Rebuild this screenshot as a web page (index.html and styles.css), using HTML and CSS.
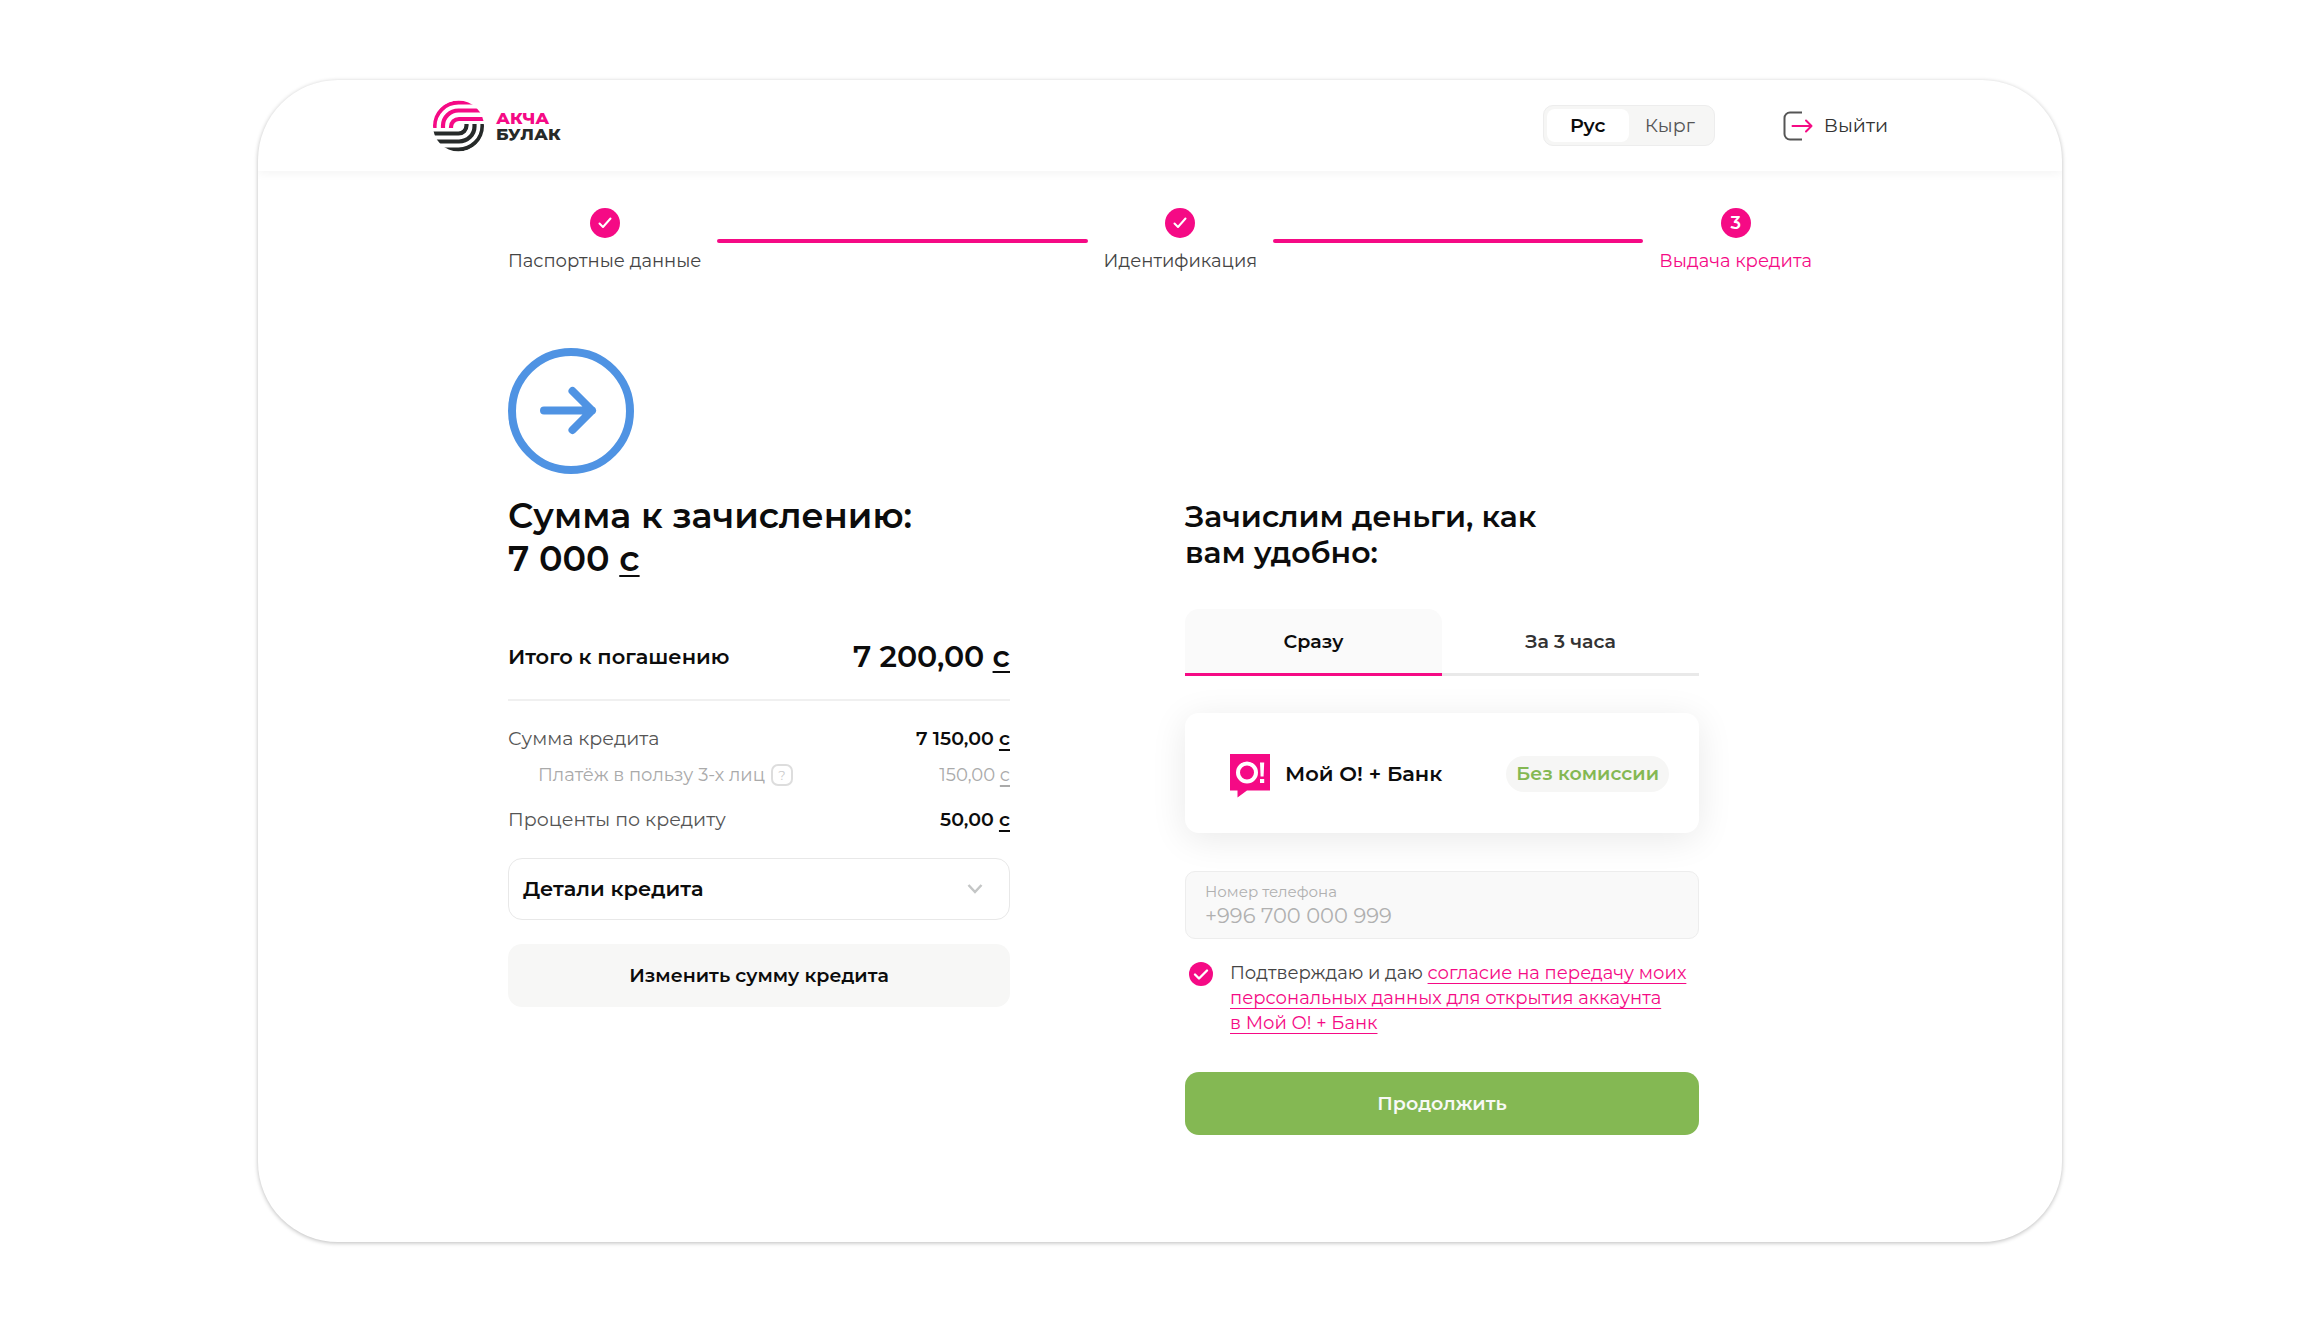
FILE: index.html
```html
<!DOCTYPE html>
<html lang="ru">
<head>
<meta charset="utf-8">
<meta name="viewport" content="width=device-width, initial-scale=1">
<title>Акча Булак — Выдача кредита</title>
<link rel="stylesheet" href="styles.css">
</head>
<body>
<div class="frame">
  <header class="header">
    <div class="header-inner">
      <a class="logo" href="#">
        <svg class="logo-mark" viewBox="0 0 52 52" aria-hidden="true">
          <defs><clipPath id="disc"><circle cx="26.500" cy="26" r="25.500"/></clipPath></defs>
          <g clip-path="url(#disc)" fill="none" stroke-width="4.200">
            <g stroke="#f50a85">
              <path d="M2.500 28V26A24 23.500 0 0 1 26.500 2.500H52"/>
              <path d="M11 28V25.500A15.500 15 0 0 1 26.500 10.500H52"/>
              <path d="M19 28V27A8 8 0 0 1 27 19H52"/>
            </g>
            <g stroke="#262a29">
              <path d="M50.500 24V26A24 23.500 0 0 1 26.500 49.500H0"/>
              <path d="M42.500 24V26.500A15.500 15 0 0 1 27 41.500H0"/>
              <path d="M34.500 24V25.500A8 8 0 0 1 26.500 33.500H0"/>
            </g>
          </g>
        </svg>
        <span class="logo-text"><span class="logo-pink">АКЧА</span><span>БУЛАК</span></span>
      </a>
      <div class="header-actions">
        <div class="lang">
          <button class="lang-item lang-active" type="button">Рус</button>
          <button class="lang-item" type="button">Кырг</button>
        </div>
        <a class="exit" href="#">
          <svg class="exit-icon" viewBox="0 0 30 30" fill="none" stroke-width="2" stroke-linecap="round" stroke-linejoin="round" aria-hidden="true">
            <path d="M19 1.500H7A5.500 5.500 0 0 0 1.500 7V23A5.500 5.500 0 0 0 7 28.500H19" stroke="#555" stroke-linecap="butt"/>
            <path d="M9.500 15H28.500M23 9.500L28.500 15L23 20.500" stroke="#f50a85"/>
          </svg>
          Выйти
        </a>
      </div>
    </div>
  </header>

  <main class="content">
    <ol class="steps">
      <li class="step">
        <span class="step-dot"><svg class="step-check" viewBox="0 0 14 12" aria-hidden="true"><path d="M1.500 6.500L5 10L12.500 1.500"/></svg></span>
        <span>Паспортные данные</span>
      </li>
      <li class="step-line" aria-hidden="true"></li>
      <li class="step">
        <span class="step-dot"><svg class="step-check" viewBox="0 0 14 12" aria-hidden="true"><path d="M1.500 6.500L5 10L12.500 1.500"/></svg></span>
        <span>Идентификация</span>
      </li>
      <li class="step-line" aria-hidden="true"></li>
      <li class="step step-current">
        <span class="step-dot">3</span>
        <span>Выдача кредита</span>
      </li>
    </ol>

    <div class="columns">
      <section class="summary">
        <svg class="summary-icon" viewBox="0 0 126 126" fill="none" stroke="#4f93e3" stroke-width="8" stroke-linecap="round" stroke-linejoin="round" aria-hidden="true">
          <circle cx="63" cy="63" r="59"/>
          <path d="M36 62.500H84M64.500 43L84 62.500L64.500 82"/>
        </svg>
        <h1 class="title">Сумма к зачислению:<br>7 000 <u>с</u></h1>
        <dl class="total">
          <dt>Итого к погашению</dt>
          <dd>7 200,00 <u>с</u></dd>
        </dl>
        <dl class="rows">
          <div class="row"><dt>Сумма кредита</dt><dd>7 150,00 <u>с</u></dd></div>
          <div class="row row-sub">
            <dt>Платёж в пользу 3-х лиц <button class="hint" type="button" aria-label="Подсказка">?</button></dt>
            <dd>150,00 <u>с</u></dd>
          </div>
          <div class="row"><dt>Проценты по кредиту</dt><dd>50,00 <u>с</u></dd></div>
        </dl>
        <button class="details" type="button" aria-expanded="false">
          Детали кредита
          <svg class="chevron" viewBox="0 0 16 12" aria-hidden="true"><path d="M1.500 2L8 9L14.500 2"/></svg>
        </button>
        <button class="button button-light" type="button">Изменить сумму кредита</button>
      </section>

      <form class="payout">
        <h2 class="subtitle">Зачислим деньги, как<br>вам удобно:</h2>
        <div class="tabs" role="tablist">
          <button class="tab tab-active" type="button" role="tab" aria-selected="true">Сразу</button>
          <button class="tab" type="button" role="tab" aria-selected="false">За 3 часа</button>
        </div>
        <div class="method">
          <svg class="method-logo" viewBox="0 0 40 44" aria-hidden="true">
            <path d="M0 0H40V36.500H17L7.500 43.500V36.500H0Z" fill="#f50a85"/>
            <circle cx="17" cy="18.500" r="9" fill="none" stroke="#fff" stroke-width="4"/>
            <path d="M30 8.500H34.200L33.600 22.500H30.600Z" fill="#fff"/>
            <rect x="30" y="25" width="4.200" height="4" fill="#fff"/>
          </svg>
          <span class="method-name">Мой О! + Банк</span>
          <span class="badge">Без комиссии</span>
        </div>
        <div class="field">
          <label class="field-label" for="phone">Номер телефона</label>
          <input class="field-input" id="phone" type="tel" value="+996 700 000 999">
        </div>
        <div class="consent">
          <input class="consent-box" id="consent" type="checkbox" checked>
          <label class="consent-text" for="consent">Подтверждаю и даю <a href="#">согласие на передачу моих<br>персональных данных для открытия аккаунта<br>в Мой О! + Банк</a></label>
        </div>
        <button class="button button-green" type="submit">Продолжить</button>
      </form>
    </div>
  </main>
</div>
</body>
</html>
```

FILE: styles.css
```css
* {
  box-sizing: border-box;
}

body {
  margin: 0;
  padding: 80px 258px;
  background: #fff;
  color: #0c0c0c;
  font-family: Montserrat, Inter, sans-serif;
  font-size: 19px;
  line-height: 24px;
}

button,
input {
  margin: 0;
  padding: 0;
  border: 0;
  background: none;
  color: inherit;
  font: inherit;
}

h1,
h2,
dl,
dd,
ol {
  margin: 0;
  padding: 0;
}

u {
  text-decoration-thickness: 2px;
  text-underline-offset: 4px;
}

.frame {
  overflow: hidden;
  border-radius: 80px;
  box-shadow: 0 1px 4px rgba(0, 0, 0, 0.27);
}

/* Header */
.header {
  padding: 0 32px;
  box-shadow: 0 2px 10px rgba(0, 0, 0, 0.05);
}

.header-inner {
  display: flex;
  align-items: center;
  justify-content: space-between;
  max-width: 1456px;
  height: 91px;
  margin: 0 auto;
}

.logo {
  display: flex;
  align-items: center;
  gap: 12px;
  color: #262a29;
  text-decoration: none;
}

.logo-mark {
  width: 52px;
  height: 52px;
}

.logo-text {
  display: grid;
  font-size: 17px;
  font-weight: 800;
  line-height: 16px;
}

.logo-pink {
  color: #f50a85;
}

.header-actions {
  display: flex;
  align-items: center;
  gap: 68px;
}

.lang {
  display: flex;
  padding: 3px;
  border: 1px solid #ededed;
  border-radius: 10px;
  background: #f6f6f5;
}

.lang-item {
  width: 82px;
  height: 33px;
  padding-top: 1px;
  border-radius: 8px;
  color: #555;
}

.lang-active {
  background: #fff;
  color: #0c0c0c;
  font-weight: 600;
}

.exit {
  display: flex;
  align-items: center;
  gap: 11px;
  color: #333;
  text-decoration: none;
}

.exit-icon {
  width: 30px;
  height: 30px;
}

/* Steps */
.content {
  max-width: 1368px;
  margin: 0 auto;
  padding: 37px 32px 107px;
}

.steps {
  display: flex;
  align-items: center;
  gap: 16px;
  font-size: 18px;
  list-style: none;
}

.step {
  display: flex;
  flex-direction: column;
  align-items: center;
  gap: 11px;
  color: #444;
}

.step-current {
  color: #f50a85;
}

.step-dot {
  display: grid;
  place-items: center;
  width: 30px;
  height: 30px;
  border-radius: 50%;
  background: #f50a85;
  color: #fff;
  font-weight: 600;
}

.step-check {
  width: 14px;
  height: 12px;
  fill: none;
  stroke: #fff;
  stroke-width: 2;
  stroke-linecap: round;
  stroke-linejoin: round;
}

.step-line {
  flex: 1;
  height: 4px;
  border-radius: 2px;
  background: #f50a85;
}

/* Columns */
.columns {
  display: grid;
  grid-template-columns: 502px 514px;
  column-gap: 175px;
  align-items: start;
  margin-top: 75px;
}

.summary {
  display: flex;
  flex-direction: column;
}

.summary-icon {
  width: 126px;
  height: 126px;
}

.title {
  margin-top: 20px;
  font-size: 35px;
  font-weight: 600;
  line-height: 43px;
}

.total {
  display: flex;
  align-items: center;
  justify-content: space-between;
  margin-top: 57px;
  padding-bottom: 22px;
  border-bottom: 2px solid #f0f0f0;
  font-size: 21px;
  font-weight: 600;
  line-height: 40px;
}

.total dd {
  font-size: 30px;
}

.rows {
  display: grid;
  gap: 12px;
  margin-top: 26px;
}

.row {
  display: flex;
  justify-content: space-between;
}

.row dt {
  display: flex;
  align-items: center;
  gap: 6px;
  color: #555;
}

.row dd {
  font-weight: 600;
}

.row-sub {
  padding-left: 30px;
  margin-bottom: 9px;
  font-size: 18px;
}

.row-sub dt,
.row-sub dd {
  color: #aaa;
  font-weight: 400;
}

.hint {
  width: 22px;
  height: 22px;
  border: 2px solid #ddd;
  border-radius: 7px;
  color: #ccc;
  font-size: 13px;
  line-height: 18px;
}

.details {
  display: flex;
  align-items: center;
  justify-content: space-between;
  height: 62px;
  margin-top: 26px;
  padding: 0 26px 0 14px;
  border: 1px solid #e8e8e8;
  border-radius: 14px;
  font-size: 21px;
  font-weight: 600;
}

.chevron {
  width: 16px;
  height: 12px;
  fill: none;
  stroke: #c4c6c6;
  stroke-width: 2.5;
}

.button {
  width: 100%;
  height: 63px;
  border-radius: 14px;
  font-weight: 600;
}

.button-light {
  margin-top: 24px;
  background: #f7f7f6;
}

.button-green {
  margin-top: 36px;
  background: #84b853;
  color: #f7f9f5;
}

/* Payout */
.payout {
  padding-top: 151px;
}

.subtitle {
  font-size: 30px;
  font-weight: 600;
  line-height: 36px;
}

.tabs {
  display: flex;
  margin-top: 38px;
}

.tab {
  flex: 1;
  height: 67px;
  padding-top: 2px;
  border-bottom: 3px solid #e9e9e9;
  color: #333;
  font-weight: 600;
}

.tab-active {
  border-color: #f50a85;
  border-radius: 14px 14px 0 0;
  background: #fafafa;
  color: #0c0c0c;
}

.method {
  display: flex;
  align-items: center;
  height: 120px;
  margin-top: 37px;
  padding: 2px 30px 0 45px;
  border-radius: 14px;
  box-shadow: 0 6px 36px rgba(0, 0, 0, 0.09);
}

.method-logo {
  width: 40px;
  height: 44px;
  margin-top: 4px;
}

.method-name {
  margin-left: 15px;
  font-size: 21px;
  font-weight: 600;
}

.badge {
  margin-left: auto;
  padding: 6px 10px;
  border-radius: 18px;
  background: #f6f6f5;
  color: #84b853;
  font-weight: 600;
}

.field {
  display: grid;
  align-content: center;
  height: 68px;
  margin-top: 38px;
  padding: 0 19px;
  border: 1px solid #ededed;
  border-radius: 10px;
  background: #f9f9f9;
  color: #b0b0b0;
}

.field-label {
  font-size: 15px;
  line-height: 20px;
}

.field-input {
  width: 100%;
  height: 26px;
  font-size: 21px;
}

.consent {
  display: flex;
  align-items: start;
  gap: 17px;
  margin-top: 22px;
  padding-left: 4px;
}

.consent-box {
  flex: none;
  width: 24px;
  height: 24px;
  margin-top: 1px;
  border-radius: 50%;
  appearance: none;
}

.consent-box:checked {
  background: #f50a85 url("data:image/svg+xml,%3Csvg xmlns='http://www.w3.org/2000/svg' viewBox='0 0 24 24'%3E%3Cpath d='M6 12.500L10 16.500L18 8.500' fill='none' stroke='white' stroke-width='2.400' stroke-linecap='round' stroke-linejoin='round'/%3E%3C/svg%3E");
}

.consent-text {
  color: #444;
  font-size: 18px;
  line-height: 25px;
}

.consent-text a {
  color: #f50a85;
  text-decoration-thickness: 1px;
  text-underline-offset: 4px;
}
```
